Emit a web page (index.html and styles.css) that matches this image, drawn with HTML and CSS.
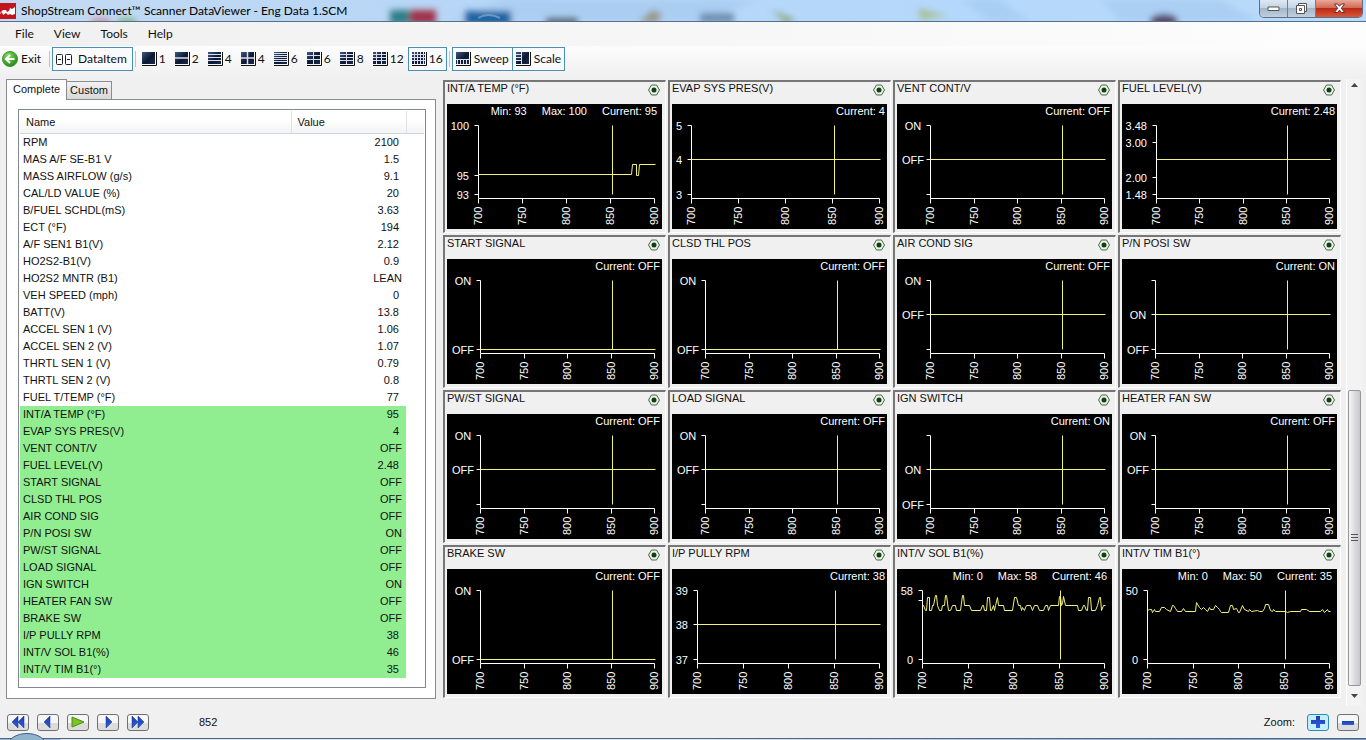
FILE: index.html
```html
<!DOCTYPE html>
<html lang="en">
<head>
<meta charset="utf-8">
<title>ShopStream Connect™ Scanner DataViewer - Eng Data 1.SCM</title>
<link rel="stylesheet" href="styles.css">
</head>
<body>
<svg class="defs" width="0" height="0" aria-hidden="true">
  <defs>
    <linearGradient id="navy" x1="0" y1="0" x2="1" y2="1"><stop offset="0" stop-color="#3c5a86"/><stop offset=".55" stop-color="#0c1830"/><stop offset="1" stop-color="#1a2a48"/></linearGradient>
    <linearGradient id="blue" x1="0" y1="0" x2="0" y2="1"><stop offset="0" stop-color="#1c3fa8"/><stop offset="1" stop-color="#2a5fe0"/></linearGradient>
    <radialGradient id="green" cx=".4" cy=".3" r=".8"><stop offset="0" stop-color="#8fdc6a"/><stop offset=".6" stop-color="#3ea52c"/><stop offset="1" stop-color="#1f7d1a"/></radialGradient>
    <filter id="soft" x="-20%" y="-50%" width="140%" height="200%"><feGaussianBlur stdDeviation="3"/></filter>
    <symbol id="frame" viewBox="0 0 15 14"><path d="M0 0h13v12H0z" fill="url(#navy)"/><path d="M14.500 0v13.500H0" fill="none" stroke="#111"/></symbol>
  </defs>
</svg>

<header class="titlebar">
  <svg class="glass" width="1366" height="21" aria-hidden="true">
    <g filter="url(#soft)">
      <path d="M500 0h260l-60 21H450zM960 0h40l30 21h-40zM1100 0h120l40 21h-140z" fill="#a2c8ef" opacity=".6"/>
      <path d="M390 10h20v14h-20z" fill="#2f7f86"/><path d="M410 10h26v14h-26z" fill="#a0304a"/>
      <path d="M92 19h18v6H92z" fill="#d08090"/><path d="M118 19h18v6h-18z" fill="#70b070"/>
      <path d="M465 11h46v14h-46z" fill="#1e62a0"/><path d="M546 18h32v6h-32z" fill="#444"/>
      <path d="M652 10l10 3-4 10h-20z" fill="#9a9a88"/><path d="M700 13h34v10h-34z" fill="#6f8fb0"/>
      <path d="M772 10l24 10-10 4z" fill="#90a880"/><path d="M918 8l30 8-28 4z" fill="#a9c09c"/>
      <ellipse cx="1164" cy="21" rx="14" ry="7" fill="#5a4a68"/>
    </g>
    <path d="M478 18q10-6 22 0" fill="none" stroke="#9cc4e4" stroke-width="2" opacity=".5"/>
  </svg>
  <svg class="logo" width="16" height="16" viewBox="0 0 16 16" aria-hidden="true"><path d="M0 0h16v16H0z" fill="#c4141c"/><path d="M0 10l3-3h3l1 2 2-1 1-3 2 1 3-2v7l-3 1-2-1-2 1-2-2-3 2-1-3-2 2z" fill="#fff"/></svg>
  <h1>ShopStream Connect™ Scanner DataViewer - Eng Data 1.SCM</h1>
  <div class="wincontrols">
    <button class="win" aria-label="Minimize"><svg width="13" height="6" viewBox="0 0 13 6"><path d="M1 1h11v3.500H1z" fill="#fff" stroke="#555"/></svg></button>
    <button class="win" aria-label="Restore"><svg width="13" height="13" viewBox="0 0 13 13"><path d="M3.500 1.500h8v8h-8z" fill="#fff" stroke="#555"/><path d="M1.500 3.500h8v8h-8z" fill="#fff" stroke="#555"/><path d="M4.500 6.500h2v2h-2z" fill="none" stroke="#555"/></svg></button>
    <button class="win close" aria-label="Close"><svg width="13" height="11" viewBox="0 0 13 11"><path d="M1.500 1h3l2 2.300L8.500 1h3L8.300 5.300l3.400 4.200h-3.200l-2-2.400-2 2.400H1.300l3.400-4.200z" fill="#fff" stroke="#5c3030"/></svg></button>
  </div>
</header>

<nav class="menubar">
  <button>File</button><button>View</button><button>Tools</button><button>Help</button>
</nav>

<div class="toolbar" role="toolbar">
  <button class="exit"><svg width="16" height="16" viewBox="0 0 16 16"><circle cx="8" cy="8" r="7.500" fill="url(#green)" stroke="#3c9430"/><path d="M12.500 8H4.500M8 4L4 8l4 4" fill="none" stroke="#fff" stroke-width="2"/></svg>Exit</button>
  <i class="sep"></i>
  <button class="on item"><svg width="17" height="11" viewBox="0 0 17 11"><rect x=".5" y=".5" width="6" height="10" rx="1" fill="#fff" stroke="#222"/><rect x="9.500" y=".5" width="6" height="10" rx="1" fill="#fff" stroke="#222"/><path d="M2 5.500h3M11 5.500h3" stroke="#222"/></svg>DataItem</button>
  <i class="sep"></i>
  <button class="count"><svg width="15" height="14"><use href="#frame"/></svg>1</button>
  <button class="count"><svg width="15" height="14"><use href="#frame"/><path d="M0 6h13" stroke="#dde" stroke-width="1.500"/></svg>2</button>
  <button class="count"><svg width="15" height="14"><use href="#frame"/><path d="M0 2.500h13M0 5.500h13M0 8.500h13" stroke="#dde"/></svg>4</button>
  <button class="count"><svg width="15" height="14"><use href="#frame"/><path d="M0 6h13M6.500 0v12" stroke="#dde" stroke-width="1.500"/></svg>4</button>
  <button class="count"><svg width="15" height="14"><use href="#frame"/><path d="M0 1.500h13M0 3.500h13M0 5.500h13M0 7.500h13M0 9.500h13" stroke="#dde"/></svg>6</button>
  <button class="count"><svg width="15" height="14"><use href="#frame"/><path d="M0 3.500h13M0 7.500h13M6.500 0v12" stroke="#dde"/></svg>6</button>
  <button class="count"><svg width="15" height="14"><use href="#frame"/><path d="M0 2.500h13M0 5.500h13M0 8.500h13M6.500 0v12" stroke="#dde"/></svg>8</button>
  <button class="count wide"><svg width="15" height="14"><use href="#frame"/><path d="M0 2.500h13M0 5.500h13M0 8.500h13M3.500 0v12M8.500 0v12" stroke="#dde"/></svg>12</button>
  <button class="count wide on"><svg width="15" height="14"><use href="#frame"/><path d="M0 2.500h13M0 5.500h13M0 8.500h13M2.500 0v12M5.500 0v12M8.500 0v12M11.500 0v12" stroke="#dde"/></svg>16</button>
  <i class="sep"></i>
  <button class="on"><svg width="15" height="14"><use href="#frame"/><path d="M0 7.500h13M1.500 8v4M4.500 8v4M7.500 8v4M10.500 8v4" stroke="#dde"/></svg>Sweep</button>
  <button class="on joined"><svg width="15" height="14"><use href="#frame"/><path d="M5.500 0v12M0 2.500h5M0 5.500h5M0 8.500h5" stroke="#dde"/></svg>Scale</button>
</div>

<main class="workspace">
  <section class="side">
    <div class="tabs" role="tablist">
      <button class="tab active" role="tab" aria-selected="true">Complete</button>
      <button class="tab" role="tab" aria-selected="false">Custom</button>
    </div>
    <div class="tabpage">
      <div class="listview">
        <table>
          <colgroup><col class="c-name"><col class="c-value"><col></colgroup>
          <thead><tr><th>Name</th><th>Value</th><th></th></tr></thead>
          <tbody id="rows"></tbody>
        </table>
      </div>
    </div>
  </section>
  <section class="graphs" id="graphs"></section>
  <div class="scrollbar" aria-hidden="true">
    <svg width="7" height="4"><path d="M0 4l3.500-4L7 4z" fill="#444"/></svg>
    <div class="track"><div class="thumb"><i></i><i></i><i></i></div></div>
    <svg width="7" height="4"><path d="M0 0l3.500 4L7 0z" fill="#444"/></svg>
  </div>
</main>

<footer class="controls">
  <button aria-label="First"><svg width="14" height="12" viewBox="0 0 14 12"><path d="M7 0v12L1 6zM13 0v12L7 6z" fill="url(#blue)" stroke="#14308c" stroke-width=".5"/></svg></button>
  <button aria-label="Previous"><svg width="14" height="12" viewBox="0 0 14 12"><path d="M9 0v12L3 6z" fill="url(#blue)" stroke="#14308c" stroke-width=".5"/></svg></button>
  <button aria-label="Play"><svg width="14" height="12" viewBox="0 0 14 12"><path d="M1 1l12 5-12 5z" fill="#7cc520" stroke="#4c8c10"/></svg></button>
  <button aria-label="Next"><svg width="14" height="12" viewBox="0 0 14 12"><path d="M5 0v12l6-6z" fill="url(#blue)" stroke="#14308c" stroke-width=".5"/></svg></button>
  <button aria-label="Last"><svg width="14" height="12" viewBox="0 0 14 12"><path d="M1 0v12l6-6zM7 0v12l6-6z" fill="url(#blue)" stroke="#14308c" stroke-width=".5"/></svg></button>
  <output class="frame">852</output>
  <span class="zoomlabel">Zoom:</span>
  <button class="hot" aria-label="Zoom in"><svg width="14" height="12" viewBox="0 0 14 12"><path d="M5 0h4v4h5v4H9v4H5V8H0V4h5z" fill="url(#blue)"/></svg></button>
  <button aria-label="Zoom out"><svg width="14" height="12" viewBox="0 0 14 12"><path d="M1 5h12v4H1z" fill="url(#blue)"/></svg></button>
</footer>
<div class="taskbar" aria-hidden="true"><svg class="orb" width="34" height="7" viewBox="0 0 34 7"><ellipse cx="17" cy="14" rx="20" ry="13.500" fill="#8fb4cc" stroke="#3c6484"/></svg></div>
<script src="app.js"></script>
</body>
</html>
```
FILE: styles.css
```css
* { box-sizing: border-box; }
:root { --ui: Lato, "Open Sans", sans-serif; --sans: "Liberation Sans", Arial, sans-serif; }
body { margin: 0; height: 100vh; display: flex; flex-direction: column; overflow: hidden; background: #f0f0f0; color: #111; font: 11px/17px var(--sans); }
button { margin: 0; padding: 0; border: 0; background: none; color: inherit; font: inherit; }
svg { display: block; flex: none; }
.defs { position: absolute; }

.titlebar { position: relative; display: flex; align-items: center; height: 22px; padding-right: 3px; border-bottom: 1px solid #55708c; background: linear-gradient(90deg, #c4daf2 0, #b8d6f6 30%, #b4d8fb 70%, #badbfa 100%); overflow: hidden; }
.glass { position: absolute; left: 0; top: 0; }
.logo { position: relative; margin-top: 1px; }
h1 { position: relative; flex: 1; margin: 0 0 0 5px; font: 12px/20px var(--ui); color: #000; }
.wincontrols { position: relative; align-self: flex-start; display: flex; height: 18px; border: 1px solid #5c6f84; border-top: 0; border-radius: 0 0 5px 5px; overflow: hidden; }
.win { display: flex; align-items: center; justify-content: center; width: 28px; border-right: 1px solid #6b7e92; background: linear-gradient(#dde8f4 0, #c4d2e2 48%, #a4b6ca 50%, #c0d0e0 100%); }
.win.close { width: 46px; border-right: 0; background: linear-gradient(#e8a898 0, #d46a58 45%, #bc2a14 50%, #d8583c 100%); }

.menubar { display: flex; height: 24px; padding-left: 5px; background: linear-gradient(90deg, #f0f0f0, #fdfdfd); }
.menubar button { padding: 0 10px; font: 12px/22px var(--ui); }
.toolbar { display: flex; height: 30px; padding: 1px 0 5px 0; background: linear-gradient(#fdfdfd, #f0f0f0); }
.toolbar button { display: flex; align-items: center; gap: 3px; padding: 0 3px; border: 1px solid transparent; font: 12px/22px var(--ui); }
.toolbar .exit { padding: 0 5px 0 1px; }
.toolbar .item { padding: 0 5px 0 3px; gap: 5px; }
.toolbar .count { width: 33px; gap: 2px; }
.toolbar .wide { width: 39px; }
.toolbar .on { border-color: #4a8fb8; background: #f8fafc; }
.toolbar .joined { margin-left: -1px; }
.sep { width: 1px; margin: 4px 2px; background: #c0c4c8; }

.workspace { flex: 1; min-height: 0; display: flex; padding: 3px 4px 0 6px; }
.side { flex: 0 0 430px; display: flex; flex-direction: column; margin-bottom: 7px; }
.tabs { display: flex; align-items: flex-end; height: 20px; }
.tab { height: 18px; padding: 0 3px; border: 1px solid #898c95; border-left: 0; border-bottom: 0; background: linear-gradient(#f2f2f2, #d8d8d8); }
.tab.active { height: 21px; padding: 0 6px 2px 6px; margin-bottom: -1px; border-left: 1px solid #898c95; background: #fff; position: relative; z-index: 1; }
.tabpage { flex: 1; display: flex; padding: 9px 9px 10px 11px; border: 1px solid #898c95; background: #fff; }
.listview { flex: 1; padding: 1px; border: 1px solid #828790; background: #fff; }
table { width: 100%; border-collapse: collapse; table-layout: fixed; }
.c-name { width: 271px; }
.c-value { width: 115px; }
th { height: 22px; padding: 2px 6px 0; text-align: left; font-weight: normal; background: linear-gradient(#fff 40%, #f2f3f5); border-right: 1px solid #dfe1e4; border-bottom: 1px solid #d5d5d5; }
th:last-child { border-right: 0; }
td { height: 17px; padding: 0 0 0 3px; line-height: 17px; white-space: pre; }
td.num, td.txt { text-align: right; padding-right: 7px; }
td.txt { padding-right: 4px; }
.plotted td:not(:last-child) { background: #90ee90; }

.graphs { flex: 1; display: grid; grid-template-columns: repeat(4, 1fr); align-content: start; gap: 2px; margin: 1px 5px 0 7px; }
.graph { padding: 0 3px 3px 2px; border: 2px solid #767676; border-right: 1px solid #fff; border-bottom: 1px solid #fff; background: #f0f0f0; }
.graph header { display: flex; justify-content: space-between; height: 22px; padding-right: 2px; }
.graph h2 { margin: 0; font: 11px/12px var(--sans); }
.graph header svg { margin-top: 2px; }
.plot { background: #000; color: #fff; }
.readout { display: flex; justify-content: flex-end; gap: 15px; height: 15px; padding-right: 2px; line-height: 15px; }
.readout.wide { padding-right: 5px; }
.plot > svg { width: 100%; height: auto; }
.plot text { fill: #fff; font: 11px var(--sans); }
.axis { fill: none; stroke: #fff; }
.trace { fill: none; stroke: #f2f27a; }

.scrollbar { flex: 0 0 16px; display: flex; flex-direction: column; align-items: center; padding: 4px 0 8px; background: #f3f3f3; border-left: 1px solid #fff; }
.track { flex: 1; align-self: stretch; display: flex; flex-direction: column; justify-content: flex-end; margin: 6px 1px 8px; }
.thumb { height: 50%; border: 1px solid #979797; border-radius: 2px; background: linear-gradient(90deg, #f6f6f6, #dcdce0 50%, #c8c8ce); display: flex; flex-direction: column; align-items: center; justify-content: center; gap: 2px; }
.thumb i { width: 7px; height: 1px; background: #555; }

.controls { display: flex; align-items: center; gap: 8px; height: 32px; padding: 0 7px; }
.controls button { display: flex; align-items: center; justify-content: center; width: 22px; height: 17px; border: 1px solid #707070; border-radius: 3px; background: linear-gradient(#f6f6f6 50%, #dcdcdc 50%); }
.controls .hot { border-color: #2c8cb8; background: #c4ecfa; }
.frame { margin-left: 42px; }
.zoomlabel { margin-left: auto; margin-right: 4px; }
.taskbar { position: relative; height: 2px; border-top: 1px solid #46688c; background: linear-gradient(90deg, #9cb8d0 0, #9cb8d0 60px, #e4e8ec 61px, #e4e8ec 50%, #7a9cc0 100%); }
.orb { position: absolute; left: 10px; bottom: 0; }
```
FILE: app.js
```javascript
const items = [
  ["RPM", "2100"], ["MAS A/F SE-B1 V", "1.5"], ["MASS AIRFLOW (g/s)", "9.1"], ["CAL/LD VALUE (%)", "20"],
  ["B/FUEL SCHDL(mS)", "3.63"], ["ECT (°F)", "194"], ["A/F SEN1 B1(V)", "2.12"], ["HO2S2-B1(V)", "0.9"],
  ["HO2S2 MNTR (B1)", "LEAN"], ["VEH SPEED (mph)", "0"], ["BATT(V)", "13.8"], ["ACCEL SEN 1 (V)", "1.06"],
  ["ACCEL SEN 2 (V)", "1.07"], ["THRTL SEN 1 (V)", "0.79"], ["THRTL SEN 2 (V)", "0.8"], ["FUEL T/TEMP (°F)", "77"],
  ["INT/A TEMP (°F)", "95"], ["EVAP SYS PRES(V)", "4"], ["VENT CONT/V", "OFF"], ["FUEL LEVEL(V)", "2.48"],
  ["START SIGNAL", "OFF"], ["CLSD THL POS", "OFF"], ["AIR COND SIG", "OFF"], ["P/N POSI SW", "ON"],
  ["PW/ST SIGNAL", "OFF"], ["LOAD SIGNAL", "OFF"], ["IGN SWITCH", "ON"], ["HEATER FAN SW", "OFF"],
  ["BRAKE SW", "OFF"], ["I/P PULLY RPM", "38"], ["INT/V SOL B1(%)", "46"], ["INT/V TIM B1(°)", "35"]
];
const FIRST_PLOTTED = 16;

document.getElementById("rows").innerHTML = items.map(([name, value], i) =>
  `<tr class="${i >= FIRST_PLOTTED ? "plotted" : ""}"><td>${name}</td><td class="${isNaN(value) ? "txt" : "num"}">${value}</td><td></td></tr>`
).join("");

// Plot area: rows TOP..BOTTOM hold the data, x runs from the axis to RIGHT.
const TOP = 6, MID = 40, BOTTOM = 75, BASE = 79, RIGHT = 207;
const onOff = { axis: 33, ticks: [[TOP, "ON"], [BOTTOM, "OFF"]], level: BOTTOM };
const offMid = { axis: 33, ticks: [[TOP, "ON"], [MID, "OFF"], [BOTTOM, ""]], level: MID };
const onMid = { axis: 33, ticks: [[TOP, ""], [MID, "ON"], [BOTTOM, "OFF"]], level: MID };

const sol = "25,21 26,21 28,26 29,26 30,13 32,13 32,26 34,26 35,21 36,21 38,11 39,11 40,21 42,26 44,26 45,21 47,21 48,11 49,11 51,26 53,26 55,21 58,21 59,26 63,26 65,11 66,11 67,21 72,21 74,26 83,26 85,21 86,21 87,26 89,26 90,13 92,13 93,26 94,26 96,21 97,26 98,21 100,13 101,21 106,21 107,26 115,26 117,13 119,13 121,21 123,21 124,26 125,23 127,26 128,23 129,21 133,21 135,26 137,21 140,21 142,26 146,26 148,21 150,21 151,26 153,21 161,21 162,12 163,12 164,21 165,19 166,12 168,21 180,21 181,26 184,26 186,21 187,21 189,26 190,26 191,13 193,13 194,26 198,26 200,21 202,13 203,13 204,26 206,21 208,21";
const tim = "25,26 27,25 29,25 30,28 32,25 33,27 37,27 39,23 42,23 44,25 48,27 50,21 51,21 53,24 55,27 59,27 61,24 63,27 73,27 74,18 77,23 79,25 81,23 83,25 85,27 87,23 88,25 91,25 93,21 95,23 97,25 98,27 99,28 106,28 108,21 110,21 111,25 114,24 116,28 117,28 120,21 122,25 126,27 127,25 129,27 135,26 137,27 140,27 142,24 143,20 146,20 148,26 150,27 151,25 153,27 163,27 165,28 168,27 178,27 179,25 184,25 187,27 198,27 200,25 202,28 205,25 206,27 208,27";

const shapes = {
  "INT/A TEMP (°F)": { range: ["93", "100"], axis: 31, ticks: [[TOP, "100"], [56, "95"], [BOTTOM, "93"]], trace: "31,55 184,55 185,45 189,45 189,56 191,56 192,45 208,45" },
  "EVAP SYS PRES(V)": { axis: 19, ticks: [[TOP, "5"], [MID, "4"], [BOTTOM, "3"]], level: MID },
  "VENT CONT/V": offMid,
  "FUEL LEVEL(V)": { axis: 34, ticks: [[TOP, "3.48"], [23, "3.00"], [58, "2.00"], [BOTTOM, "1.48"]], level: MID },
  "START SIGNAL": onOff, "CLSD THL POS": onOff, "AIR COND SIG": offMid, "P/N POSI SW": onMid,
  "PW/ST SIGNAL": offMid, "LOAD SIGNAL": offMid, "IGN SWITCH": onMid, "HEATER FAN SW": offMid, "BRAKE SW": onOff,
  "I/P PULLY RPM": { axis: 25, ticks: [[TOP, "39"], [MID, "38"], [BOTTOM, "37"]], level: MID },
  "INT/V SOL B1(%)": { range: ["0", "58"], axis: 25, ticks: [[TOP, "58"], [16, ""], [BOTTOM, "0"]], trace: sol },
  "INT/V TIM B1(°)": { range: ["0", "50"], axis: 25, ticks: [[TOP, "50"], [BOTTOM, "0"]], trace: tim }
};

function graph([name, value]) {
  const s = shapes[name];
  const width = RIGHT - s.axis;
  let axis = `M${s.axis} ${TOP}V${BASE}H${RIGHT}`;
  let labels = "";
  for (const [y, label] of s.ticks) {
    axis += `M${s.axis - 4} ${y}h4`;
    const words = isNaN(label);
    labels += `<text x="${s.axis - (words ? 17 : 9)}" y="${y + 5}" text-anchor="${words ? "middle" : "end"}">${label}</text>`;
  }
  for (let i = 0; i <= 4; i++) {
    const x = Math.round(s.axis + width * i / 4);
    axis += `M${x} ${BASE}v5`;
    labels += `<text transform="translate(${x + 4} 106) rotate(-90)">${700 + i * 50}</text>`;
  }
  const cursor = Math.round(s.axis + width * 0.76);
  const trace = s.trace || `${s.axis},${s.level} 208,${s.level}`;
  const range = s.range ? `<span>Min: ${s.range[0]}</span><span>Max: ${s.range[1]}</span>` : "";
  return `<article class="graph">
    <header><h2>${name}</h2>
      <svg width="12" height="12" viewBox="0 0 12 12"><path d="M3.500 1h5L11.500 6l-3 5h-5L.5 6z" fill="#e6f4e6" stroke="#4c664c"/><circle cx="6" cy="6" r="2.500" fill="#153c15"/></svg>
    </header>
    <div class="plot">
      <div class="readout ${s.range ? "wide" : ""}">${range}<span>Current: ${value}</span></div>
      <svg viewBox="0 0 215 110"><g transform="translate(.5 .5)">
        <path class="axis" d="${axis}"/>
        <polyline class="trace" points="${trace}"/>
        <path class="trace" d="M${cursor} ${TOP}V${BOTTOM}"/></g>${labels}
      </svg>
    </div>
  </article>`;
}

document.getElementById("graphs").innerHTML = items.slice(FIRST_PLOTTED).map(graph).join("");
```
